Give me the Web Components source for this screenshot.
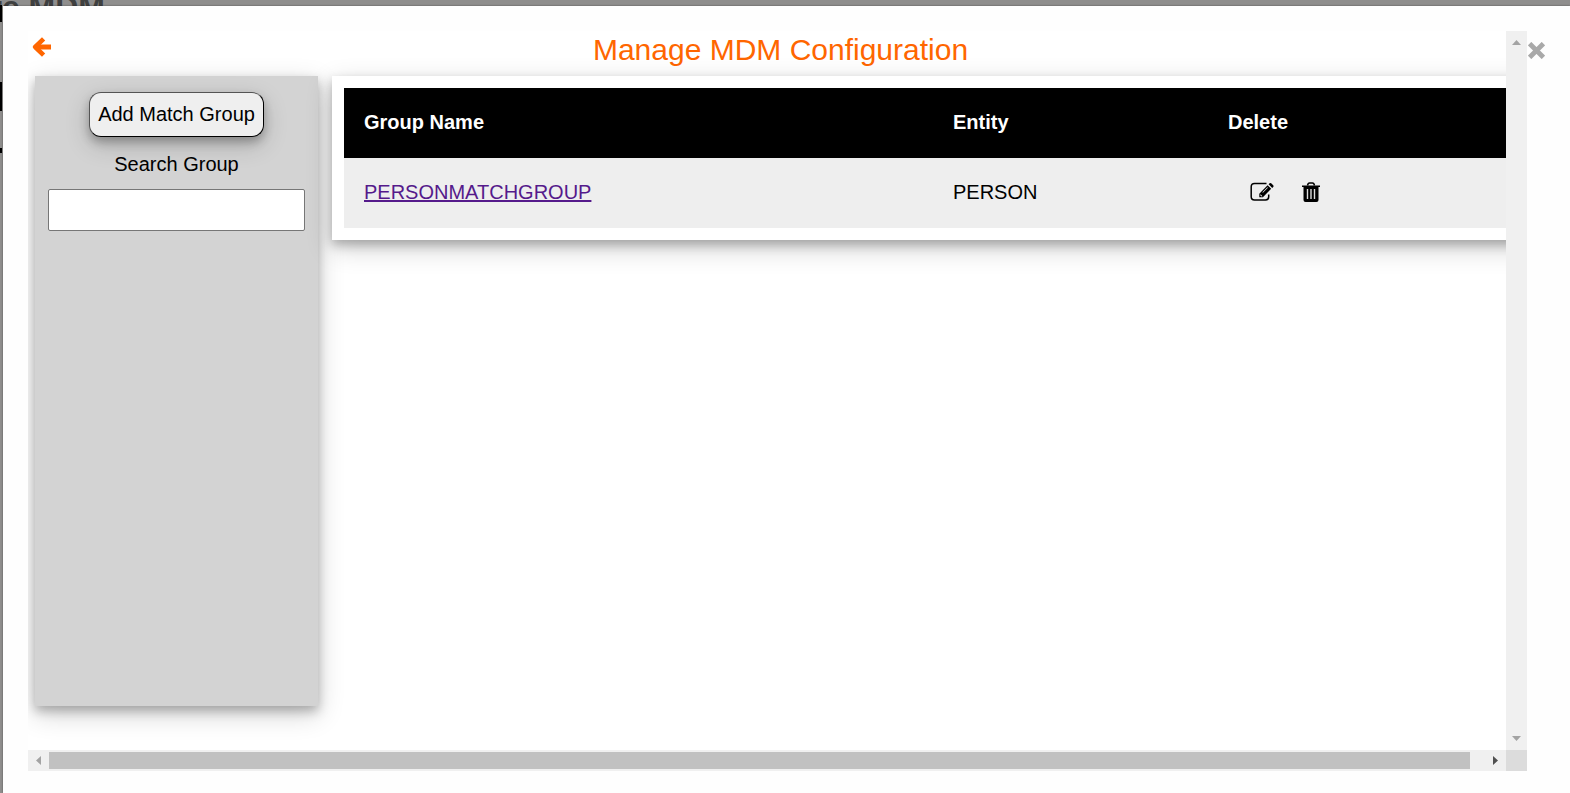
<!DOCTYPE html>
<html lang="en">
<head>
<meta charset="utf-8">
<title>Manage MDM Configuration</title>
<style>
  html, body { height: 100%; margin: 0; }
  body { font: 20px/24px "Liberation Sans", Arial, sans-serif; color: #000; background: #8f8e8d; overflow: hidden;
    --card-shadow: 0 5px 10px 0 rgba(0,0,0,.25), 0 8px 25px 0 rgba(0,0,0,.19); }
</style>
</head>
<body>
<mdm-page>
  <mdm-dialog>
    <mdm-header slot="header">Manage MDM Configuration</mdm-header>
    <mdm-sidebar></mdm-sidebar>
    <mdm-groups></mdm-groups>
  </mdm-dialog>
</mdm-page>
<script>
const define = (name, html) => customElements.define(name, class extends HTMLElement {
  constructor() {
    super();
    const t = document.createElement('template');
    t.innerHTML = html;
    this.attachShadow({ mode: 'open' }).append(t.content.cloneNode(true));
  }
});

define('mdm-page', `
<style>
  :host { display: block; position: relative; box-sizing: border-box; height: 100vh; padding: 6px 0 0 3px; overflow: hidden; }
  .name { position: absolute; right: calc(100% - 105px); top: -9px; font-weight: bold; font-size: 32px; line-height: 32px; white-space: nowrap; color: #3f4040; }
  .edge { position: absolute; left: 0; width: 2px; background: #000; }
  .a { top: 5px; height: 17px; }
  .b { top: 82px; height: 29px; }
  .c { top: 148px; height: 5px; }
  ::slotted(*) { position: relative; }
</style>
<div class="name">Configure MDM</div>
<div class="edge a"></div><div class="edge b"></div><div class="edge c"></div>
<slot></slot>`);

define('mdm-scrollbar', `
<style>
  :host { display: flex; align-items: center; background: #f0f0f0; }
  :host([vertical]) { flex-direction: column; }
  svg { flex: none; width: 21px; height: 21px; fill: #a3a3a3; }
  .thumb { flex: 1; height: 17px; background: #c1c1c1; }
  .rest { width: 15px; }
  .on { fill: #505050; }
  :host([vertical]) .thumb { background: none; }
  :host([vertical]) .rest { display: none; }
  .v, :host([vertical]) .h { display: none; }
  :host([vertical]) .v { display: block; }
</style>
<svg class="h" viewBox="0 0 21 21"><path d="M13 6v9l-5-4.500z"/></svg>
<svg class="v" viewBox="0 0 21 21"><path d="M6 14h9l-4.500-5z"/></svg>
<div class="thumb"></div><div class="rest"></div>
<svg class="h on" viewBox="0 0 21 21"><path d="M8 6v9l5-4.500z"/></svg>
<svg class="v" viewBox="0 0 21 21"><path d="M6 7h9l-4.500 5z"/></svg>`);

define('mdm-dialog', `
<style>
  :host { display: grid; box-sizing: border-box; height: 100%; padding: 25px 19px 22px 25px;
    grid-template: minmax(0, 1fr) 21px / minmax(0, 1fr) 21px 24px; background: #fefefe; box-shadow: 0 0 2px rgba(0,0,0,.4); }
  .view { overflow: hidden; background: #fff; }
  .content { display: grid; box-sizing: border-box; width: calc(100% + 28px); height: calc(100% - 44px);
    grid-template: 45px minmax(0, 1fr) / 283px minmax(0, 1fr); column-gap: 14px; padding-left: 7px; }
  .top { grid-column: 1 / -1; }
  .corner { background: #dcdcdc; }
  .close { grid-column: 3; grid-row: 1; align-self: start; justify-self: start; display: flex; margin: 11px 0 0 1px; padding: 0; border: 0; background: none; }
  .close svg { display: block; width: 17px; height: 17px; fill: none; stroke: #a9a9a9; stroke-width: 4.500; }
</style>
<div class="view"><div class="content"><div class="top"><slot name="header"></slot></div><slot></slot></div></div>
<mdm-scrollbar vertical></mdm-scrollbar>
<button class="close" aria-label="Close"><svg viewBox="0 0 16 16"><path d="M1.500 1.500l13 13M14.500 1.500l-13 13"/></svg></button>
<mdm-scrollbar></mdm-scrollbar>
<div class="corner"></div>`);

define('mdm-header', `
<style>
  :host { display: grid; grid-template-columns: 20px minmax(0, 1fr); color: #ff6600; }
  a { display: block; height: 20px; margin-top: 6px; color: inherit; }
  svg { display: block; width: 20px; height: 20px; margin-left: -3px; }
  h1 { margin: 0; padding-right: 28px; font-size: 30px; line-height: 38px; font-weight: normal; text-align: center; }
</style>
<a href="#" aria-label="Back"><svg viewBox="0 0 20 20" fill="none" stroke="currentColor" stroke-width="4.600" stroke-linejoin="round"><path d="M3.500 10H19" stroke-width="5"/><path d="M11.600 1.800L3.200 10l8.400 8.200"/></svg></a>
<h1><slot></slot></h1>`);

define('mdm-sidebar', `
<style>
  :host { display: flex; flex-direction: column; align-items: center; padding: 16px 13px; background: #d3d3d3; box-shadow: var(--card-shadow); }
  button { height: 45px; padding: 0 8px 2px; font: inherit; color: #000; background: #efefef; border: 1px outset #000; border-radius: 12px; box-shadow: var(--card-shadow); }
  label { margin: 15px 0 13px; }
  input { box-sizing: border-box; width: 100%; height: 42px; padding: 0 8px; font: inherit; border: 1px solid #767676; border-radius: 2px; background: #fff; }
</style>
<button>Add Match Group</button>
<label for="q">Search Group</label>
<input id="q" type="text">`);

define('mdm-groups', `
<style>
  :host { display: block; align-self: start; padding: 12px; background: #fff; box-shadow: var(--card-shadow); }
  table { width: 100%; border-collapse: collapse; table-layout: fixed; }
  th, td { height: 70px; box-sizing: border-box; padding: 0 20px 2px; text-align: left; vertical-align: middle; line-height: 24px; }
  th { color: #fff; background: #000; }
  td { background: #eee; }
  .g { width: 50%; } .e { width: 275px; }
  a { color: #551a8b; text-decoration-thickness: 2px; }
  .acts { display: flex; gap: 28px; padding: 0 0 0 22px; }
  button { display: block; padding: 0; border: 0; background: none; }
  svg { display: block; height: 20px; }
</style>
<table>
<thead><tr><th class="g">Group Name</th><th class="e">Entity</th><th>Delete</th></tr></thead>
<tbody><tr><td><a href="#">PERSONMATCHGROUP</a></td><td>PERSON</td><td><div class="acts">
<button aria-label="Edit"><svg width="24" viewBox="0 0 24 20" fill="none"><path d="M16.500 1.500H4.500Q1.200 1.500 1.200 4.700v10.100q0 3.200 3.300 3.200h11q3.200 0 3.200-3.200v-2.300" stroke="#000" stroke-width="1.500"/><path fill-rule="evenodd" d="M17.600 3.200l3.600 3.600-8.300 8.500H9.300v-3.600zM10.600 12.300l-.4 1 1.300 1.300 1-.4zM17.400 5.200l-5 5 .5.500 5-5z" fill="#000"/><path d="M18.600 2.300l1-1q.8-.8 1.600 0l2 2q.8.800 0 1.600l-1 1z" fill="#000"/></svg></button>
<button aria-label="Delete"><svg width="18" viewBox="0 0 18 20"><path d="M5.500 3.500q.5-2.500 2-2.500h3q1.500 0 2 2.500" fill="none" stroke="#000" stroke-width="1.500"/><path d="M0 3.400h18v1.500h-1.500V18q0 2-2 2h-11q-2 0-2-2V4.900H0z"/><path d="M5.500 7v10M9 7v10M12.500 7v10" stroke="#ddd" stroke-width="1.400"/></svg></button>
</div></td></tr></tbody></table>`);
</script>
</body>
</html>
